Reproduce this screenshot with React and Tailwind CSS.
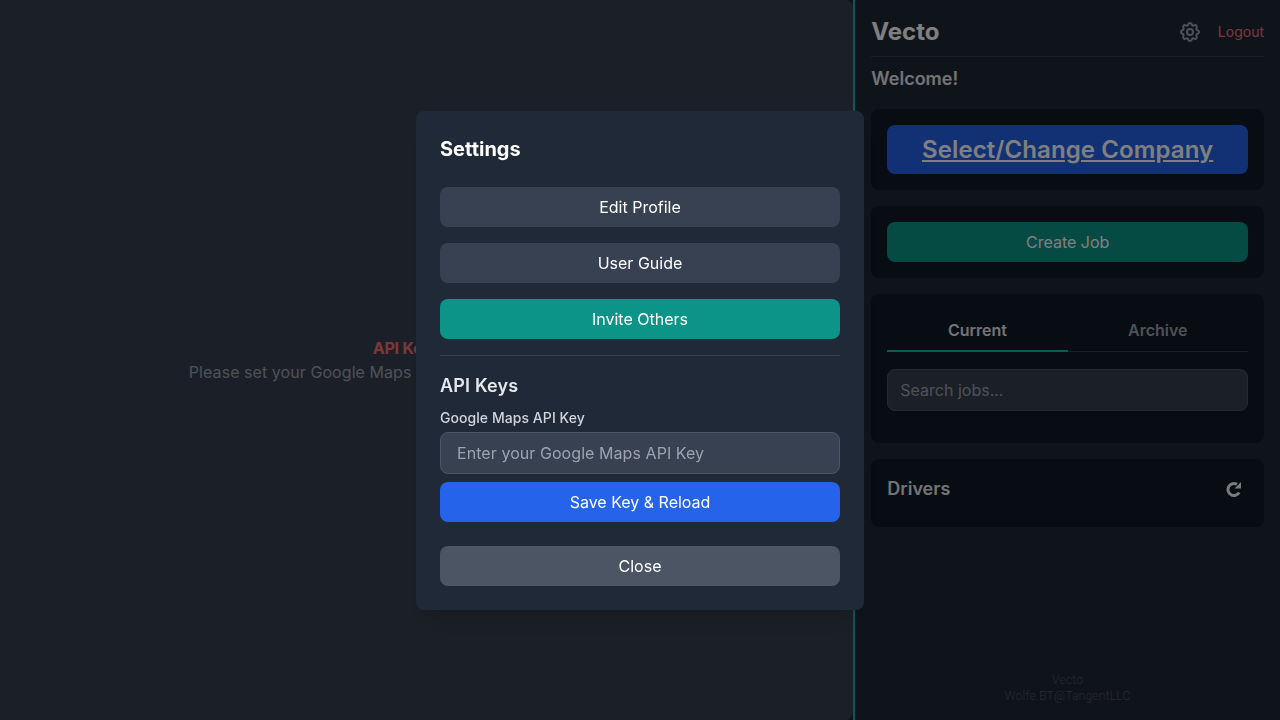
import React from 'react';
import { HiOutlineCog } from 'react-icons/hi';

function ModalButton({ className, children }) {
  return (
    <button className={`h-10 w-full rounded-lg text-base text-white ${className}`}>{children}</button>
  );
}

function SettingsModal() {
  return (
    <div className="fixed inset-0 z-50 flex items-center justify-center bg-black/50">
      <div className="w-full max-w-md rounded-lg bg-[#1f2937] p-6 shadow-xl">
        <h2 className="mb-6 text-xl font-bold text-white">Settings</h2>
        <div className="space-y-4">
          <ModalButton className="bg-[#374151]">Edit Profile</ModalButton>
          <ModalButton className="bg-[#374151]">User Guide</ModalButton>
          <ModalButton className="bg-[#0d9488]">Invite Others</ModalButton>
        </div>
        <div className="mt-4 border-t border-[#374151] pt-4">
          <h3 className="text-lg font-semibold tracking-[0.01em] text-[#e5e7eb]">API Keys</h3>
          <label className="mt-2 block text-sm font-medium tracking-[0.004em] text-[#d1d5db]">Google Maps API Key</label>
          <input
            placeholder="Enter your Google Maps API Key"
            className="mt-1 block h-[42px] w-full rounded-lg border border-[#4b5563] bg-[#374151] px-4 text-base tracking-[0.004em] text-white placeholder:text-[#9ca3af]"
          />
          <ModalButton className="mt-2 bg-[#2563eb]">Save Key &amp; Reload</ModalButton>
        </div>
        <ModalButton className="mt-6 bg-[#4b5563]">Close</ModalButton>
      </div>
    </div>
  );
}

function Sidebar() {
  return (
    <aside className="flex h-full w-1/3 shrink-0 flex-col border-l-2 border-[#14b8a6] bg-[#1f2937] p-4">
      <div className="flex h-[41px] items-start justify-between border-b border-[#374151]">
        <h1 className="text-2xl font-bold text-white">Vecto</h1>
        <div className="flex items-center gap-4 pt-1">
          <HiOutlineCog className="h-6 w-6 text-[#9ca3af]" />
          <button className="text-sm text-[#f87171]">Logout</button>
        </div>
      </div>
      <p className="mt-2 text-lg font-semibold text-[#e5e7eb]">Welcome!</p>
      <div className="mt-4 rounded-lg bg-[#111827] p-4">
        <button className="h-[49px] w-full rounded-lg bg-[#2563eb] text-2xl font-semibold tracking-[0.004em] text-white underline">
          Select/Change Company
        </button>
      </div>
      <div className="mt-4 rounded-lg bg-[#111827] p-4">
        <button className="h-10 w-full rounded-lg bg-[#0d9488] text-base text-white">Create Job</button>
      </div>
      <div className="mt-4 h-[149px] rounded-lg bg-[#111827] p-4">
        <div className="flex h-[42px] border-b border-[#374151]">
          <button className="-mb-px flex-1 border-b-2 border-[#14b8a6] text-base font-semibold text-[#e5e7eb]">Current</button>
          <button className="-mb-px flex-1 border-b-2 border-transparent text-base font-semibold text-[#9ca3af]">Archive</button>
        </div>
        <input
          placeholder="Search jobs..."
          className="mt-[17px] block h-[42px] w-full rounded-lg border border-[#4b5563] bg-[#374151] px-3 text-base text-white placeholder:text-[#9ca3af]"
        />
      </div>
      <div className="mt-4 flex h-[68px] items-start justify-between rounded-lg bg-[#111827] p-4">
        <h2 className="text-lg font-semibold text-[#e5e7eb]">Drivers</h2>
        <button className="pr-[6px] pt-[6px] text-[#f3f4f6]">
          <svg viewBox="0 0 16 16" className="h-4 w-4" fill="none">
            <path d="M13.2 11.5A6 6 0 1 1 11 3.3" stroke="currentColor" strokeWidth="3" />
            <path d="M15 1V7.5H8.5Z" fill="currentColor" />
          </svg>
        </button>
      </div>
      <div className="mt-auto text-center text-xs font-light tracking-[0.02em] text-[#4b5563] [font-family:Roboto,sans-serif]">
        <p>Vecto</p>
        <p>Wolfe.BT@TangentLLC</p>
      </div>
    </aside>
  );
}

export default function App() {
  return (
    <div className="flex h-[720px] w-full overflow-hidden bg-[#1f2937] [font-optical-sizing:none] [font-family:Inter,sans-serif]">
      <main className="flex flex-1 flex-col items-center justify-center rounded-r-lg bg-[#374151] text-center">
        <p className="font-bold tracking-[-0.01em] text-[#f87171]">API Key Unset</p>
        <p className="tracking-[0.004em] text-[#9ca3af]">Please set your Google Maps API Key in settings to load maps.</p>
      </main>
      <Sidebar />
      <SettingsModal />
    </div>
  );
}
